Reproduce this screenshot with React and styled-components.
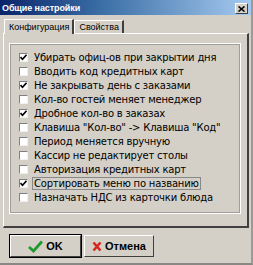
import styled, { createGlobalStyle } from 'styled-components';

const GlobalStyle = createGlobalStyle`
  html, body {
    margin: 0;
    padding: 0;
    background: #d4d0c8;
  }
`;

const Window = styled.div`
  width: 253px;
  height: 265px;
  box-sizing: border-box;
  background: #d4d0c8;
  border-right: 2px solid #9c9a94;
  border-bottom: 2px solid #8a8884;
  display: flex;
  flex-direction: column;
  font-family: 'DejaVu Sans', Verdana, sans-serif;
  color: #000;
  overflow: hidden;
`;

const TitleBar = styled.div`
  height: 15px;
  display: flex;
  align-items: center;
  justify-content: space-between;
  padding: 0 3px 0 2px;
  background: linear-gradient(to right, #0a246a 0%, #3a6ea5 40%, #a6caf0 100%);
`;

const Title = styled.span`
  color: #fff;
  font-family: 'Liberation Sans', Arial, sans-serif;
  font-weight: bold;
  font-size: 9px;
  letter-spacing: -0.1px;
`;

const CloseButton = styled.div`
  width: 13px;
  height: 11px;
  margin-top: 2px;
  background: #d4d0c8;
  box-sizing: border-box;
  border: 1px solid;
  border-color: #fff #404040 #404040 #fff;
  display: flex;
  align-items: center;
  justify-content: center;
`;

const Body = styled.div`
  flex: 1;
  display: flex;
  flex-direction: column;
  padding: 3px 2px 0 3px;
`;

const TabRow = styled.div`
  display: flex;
  align-items: flex-end;
  height: 15px;
  padding-left: 1px;
  position: relative;
  z-index: 1;
`;

const Tab = styled.div`
  font-family: 'Liberation Sans', Arial, sans-serif;
  font-size: 9px;
  padding: 0 3px 0 4px;
  height: ${(p) => (p.active ? '15px' : '13px')};
  line-height: ${(p) => (p.active ? '14px' : '13px')};
  box-sizing: border-box;
  border-top: 1px solid #fff;
  border-left: 1px solid #fff;
  border-right: 2px solid #404040;
  margin-bottom: ${(p) => (p.active ? '-1px' : '0')};
  background: #d4d0c8;
`;

const Panel = styled.div`
  height: 195px;
  box-sizing: border-box;
  border-top: 1px solid #fff;
  border-left: 1px solid #fff;
  border-right: 2px solid #404040;
  border-bottom: 2px solid #404040;
  padding: 9px 6px 0 5px;
`;

const GroupBox = styled.div`
  height: 171px;
  box-sizing: border-box;
  border: 1px solid #fff;
  outline: 1px solid #a09e98;
  outline-offset: -2px;
  padding: 8px 0 0 9px;
  display: flex;
  flex-direction: column;
  gap: 4px;
`;

const Row = styled.label`
  display: flex;
  align-items: center;
  height: 10px;
  font-size: 10px;
  letter-spacing: -0.2px;
  white-space: nowrap;
`;

const Box = styled.span`
  width: 9px;
  height: 9px;
  box-sizing: border-box;
  background: #fff;
  border-top: 1px solid #808080;
  border-left: 1px solid #808080;
  border-right: 1px solid #f0f0f0;
  border-bottom: 1px solid #f0f0f0;
  margin-right: 4px;
  flex: none;
  display: flex;
  align-items: center;
  justify-content: center;
`;

const Caption = styled.span`
  padding: 0 1px;
  border: 1px ${(p) => (p.focused ? 'solid #888' : 'solid transparent')};
  line-height: 11px;
`;

const Footer = styled.div`
  display: flex;
  gap: 3px;
  padding: 7px 0 0 7px;
`;

const Button = styled.div`
  width: ${(p) => p.w}px;
  height: 22px;
  box-sizing: border-box;
  border: 1px solid;
  border-color: #fff #404040 #404040 #fff;
  outline: ${(p) => (p.primary ? '1px solid #000' : 'none')};
  display: flex;
  align-items: center;
  justify-content: center;
  gap: 3px;
  font-family: 'Liberation Sans', Arial, sans-serif;
  font-weight: bold;
  font-size: 11px;
`;

const items = [
  ['Убирать офиц-ов при закрытии дня', true],
  ['Вводить код кредитных карт', false],
  ['Не закрывать день с заказами', true],
  ['Кол-во гостей меняет менеджер', false],
  ['Дробное кол-во в заказах', true],
  ['Клавиша "Кол-во" -> Клавиша "Код"', false],
  ['Период меняется вручную', false],
  ['Кассир не редактирует столы', false],
  ['Авторизация кредитных карт', false],
  ['Сортировать меню по названию', true, true],
  ['Назначать НДС из карточки блюда', false],
];

const Check = () => (
  <svg width="7" height="7" viewBox="0 0 7 7">
    <path d="M0.5 3 L2.5 5.2 L6.5 0.8" stroke="#000" strokeWidth="1.6" fill="none" />
  </svg>
);

export default function App() {
  return (
    <>
      <GlobalStyle />
      <Window>
        <TitleBar>
          <Title>Общие настройки</Title>
          <CloseButton>
            <svg width="7" height="6" viewBox="0 0 7 6">
              <path d="M0.5 0.5 L6.5 5.5 M6.5 0.5 L0.5 5.5" stroke="#000" strokeWidth="1.6" />
            </svg>
          </CloseButton>
        </TitleBar>
        <Body>
          <TabRow>
            <Tab active>Конфигурация</Tab>
            <Tab>Свойства</Tab>
          </TabRow>
          <Panel>
            <GroupBox>
              {items.map(([text, checked, focused]) => (
                <Row key={text}>
                  <Box>{checked && <Check />}</Box>
                  <Caption focused={focused}>{text}</Caption>
                </Row>
              ))}
            </GroupBox>
          </Panel>
          <Footer>
            <Button w={71} primary>
              <svg width="15" height="13" viewBox="0 0 15 13">
                <path d="M1 7 L5.5 11 L14 1.5" stroke="#1f9a2e" strokeWidth="2.8" fill="none" />
              </svg>
              OK
            </Button>
            <Button w={70}>
              <svg width="10" height="11" viewBox="0 0 10 11">
                <path d="M1.5 1.5 L8.5 9.5 M8.5 1.5 L1.5 9.5" stroke="#d7261b" strokeWidth="2.6" />
              </svg>
              Отмена
            </Button>
          </Footer>
        </Body>
      </Window>
    </>
  );
}
